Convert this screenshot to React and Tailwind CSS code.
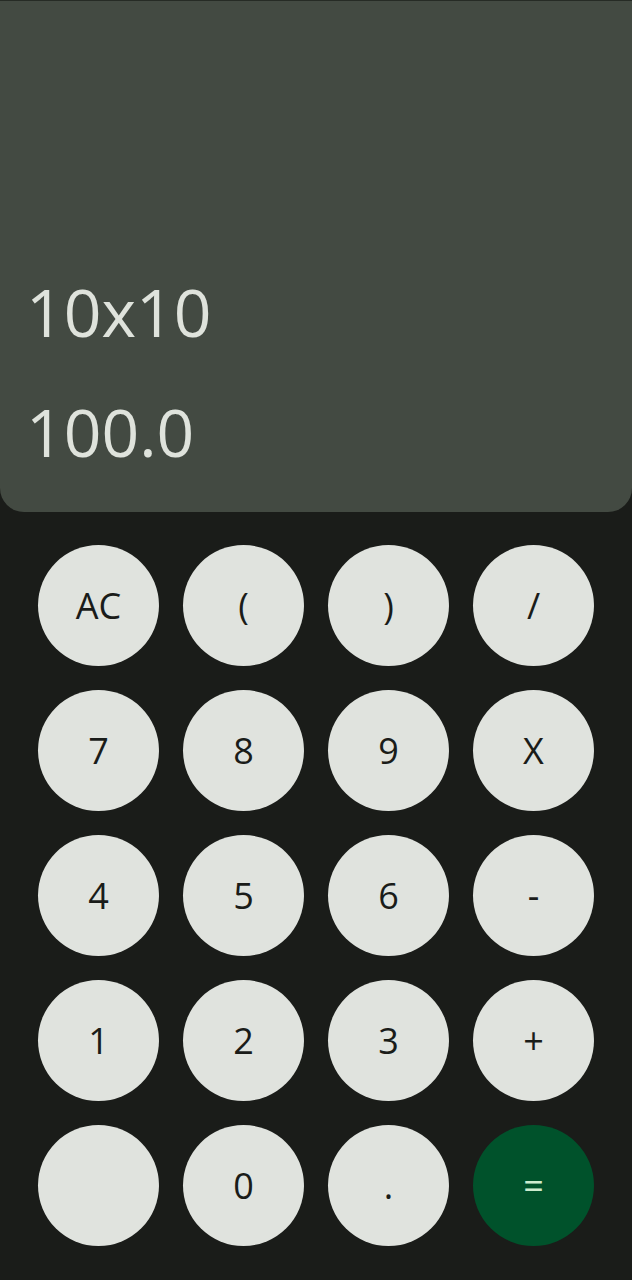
import React from 'react'

const keys = [
  ['AC', '(', ')', '/'],
  ['7', '8', '9', 'X'],
  ['4', '5', '6', '-'],
  ['1', '2', '3', '+'],
  ['', '0', '.', '='],
]

function Key({ label }) {
  const isEquals = label === '='
  return (
    <button
      className={
        isEquals
          ? 'w-[121px] h-[121px] rounded-full bg-[#00522b] text-[#cdeccf] flex items-center justify-center text-[36px] font-medium'
          : 'w-[121px] h-[121px] rounded-full bg-[#e0e3de] text-[#1a1c19] flex items-center justify-center text-[36px] font-medium'
      }
    >
      {label}
    </button>
  )
}

export default function App() {
  return (
    <div
      className="w-[632px] h-[1280px] bg-[#1a1c19] overflow-hidden"
      style={{ fontFamily: '"Open Sans", "Noto Sans", sans-serif' }}
    >
      {/* Display */}
      <div className="h-[512px] bg-[#434a42] border-t border-[#262b25] rounded-b-[24px] flex flex-col justify-end px-[26px] pb-[21px] text-[#dfe3dc]">
        <div className="text-[66px] leading-[120px]">10x10</div>
        <div className="text-[66px] leading-[120px]">100.0</div>
      </div>

      {/* Keypad */}
      <div className="grid grid-cols-4 gap-[24px] pt-[33px] pl-[38px] w-fit">
        {keys.flat().map((k, i) => (
          <Key key={i} label={k} />
        ))}
      </div>
    </div>
  )
}
